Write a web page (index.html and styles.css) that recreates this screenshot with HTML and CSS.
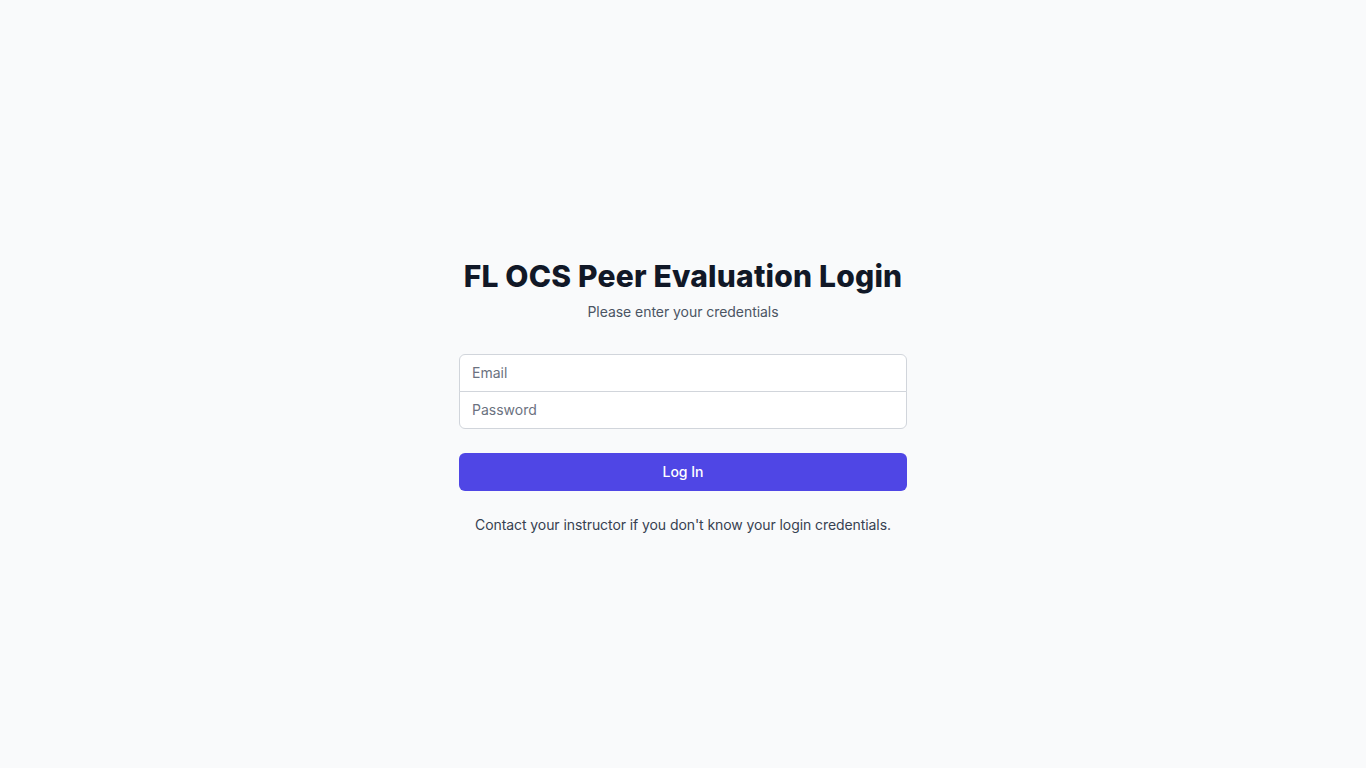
FILE: index.html
```html
<!DOCTYPE html>
<html lang="en">
<head>
<meta charset="utf-8">
<title>FL OCS Peer Evaluation Login</title>
<link rel="stylesheet" href="styles.css">
</head>
<body>
<main class="page">
  <div class="card">
    <div class="header">
      <h2 class="title">FL OCS Peer Evaluation Login</h2>
      <p class="subtitle">Please enter your credentials</p>
    </div>
    <form class="form">
      <div class="fields">
        <input class="field field-top" type="email" placeholder="Email">
        <input class="field field-bottom" type="password" placeholder="Password">
      </div>
      <button class="btn" type="button">Log In</button>
      <p class="note">Contact your instructor if you don't know your login credentials.</p>
    </form>
  </div>
</main>
</body>
</html>
```
FILE: styles.css
```css
* { box-sizing: border-box; }
html, body {
  margin: 0;
  padding: 0;
  background: #f9fafb;
  font-family: Inter, "Noto Sans", "Liberation Sans", sans-serif;
  color: #111827;
}
.page {
  min-height: 100vh;
  display: flex;
  align-items: center;
  justify-content: center;
  padding-top: 24px;
}
.card {
  width: 448px;
  display: flex;
  flex-direction: column;
}
.header { text-align: center; }
.title {
  margin: 0;
  font-size: 30px;
  line-height: 36px;
  font-weight: 800;
  color: #111827;
  letter-spacing: 0.2px;
}
.subtitle {
  margin: 8px 0 0;
  font-size: 14px;
  line-height: 20px;
  color: #4b5563;
  letter-spacing: -0.05px;
}
.form {
  margin-top: 32px;
  display: flex;
  flex-direction: column;
  gap: 24px;
}
.fields {
  display: flex;
  flex-direction: column;
}
.field {
  display: block;
  width: 100%;
  height: 38px;
  padding: 7.5px 12px 8.5px;
  font: inherit;
  font-size: 14px;
  line-height: 20px;
  color: #111827;
  background: #fff;
  border: 1px solid #d1d5db;
  outline: none;
}
.field::placeholder { color: #6b7280; }
.field-top { border-radius: 6px 6px 0 0; }
.field-bottom { border-radius: 0 0 6px 6px; margin-top: -1px; }
.btn {
  height: 38px;
  width: 100%;
  border: none;
  border-radius: 6px;
  background: #4f46e5;
  color: #fff;
  font: inherit;
  font-size: 14px;
  font-weight: 500;
  padding: 0 0 1px;
  cursor: pointer;
}
.note {
  margin: 0;
  text-align: center;
  font-size: 14px;
  line-height: 20px;
  color: #374151;
  letter-spacing: -0.08px;
}
```
